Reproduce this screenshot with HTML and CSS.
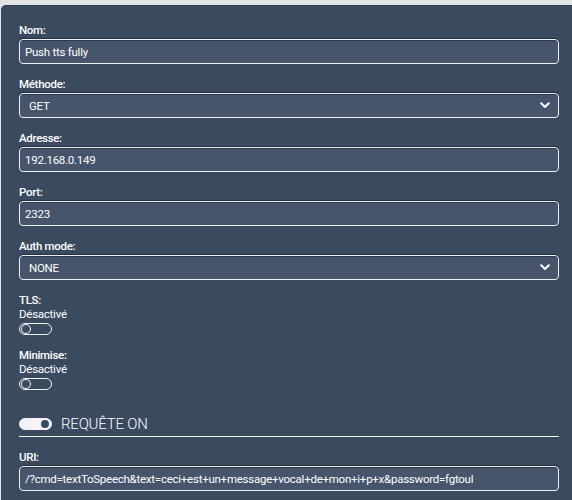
FILE: index.html
```html
<!DOCTYPE html>
<html lang="fr">

<head>
    <meta charset="UTF-8">
    <title>Requête HTTP</title>
    <link rel="stylesheet" href="styles.css">
</head>

<body>
    <!-- panel : le formulaire de la requête -->
    <div class="panel">
        <div class="field">
            <label class="fieldLabel">Nom:</label>
            <input class="fieldInput" type="text" value="Push tts fully">
        </div>
        <div class="field">
            <label class="fieldLabel">Méthode:</label>
            <div class="selectWrap">
                <select class="fieldInput fieldSelect">
                    <option>GET</option>
                    <option>POST</option>
                </select>
                <svg class="chevron" width="10" height="7" viewBox="0 0 10 7">
                    <path d="M1.2 1.3 L5 5 L8.8 1.3" fill="none" stroke="#fff" stroke-width="2" stroke-linecap="round" stroke-linejoin="round"/>
                </svg>
            </div>
        </div>
        <div class="field">
            <label class="fieldLabel">Adresse:</label>
            <input class="fieldInput" type="text" value="192.168.0.149">
        </div>
        <div class="field">
            <label class="fieldLabel">Port:</label>
            <input class="fieldInput" type="text" value="2323">
        </div>
        <div class="field">
            <label class="fieldLabel">Auth mode:</label>
            <div class="selectWrap">
                <select class="fieldInput fieldSelect">
                    <option>NONE</option>
                    <option>BASIC</option>
                </select>
                <svg class="chevron" width="10" height="7" viewBox="0 0 10 7">
                    <path d="M1.2 1.3 L5 5 L8.8 1.3" fill="none" stroke="#fff" stroke-width="2" stroke-linecap="round" stroke-linejoin="round"/>
                </svg>
            </div>
        </div>
        <!-- interrupteurs -->
        <div class="field">
            <label class="fieldLabel switchLabel">TLS:</label>
            <div class="switchState">Désactivé</div>
            <div class="switch"><span class="knob"></span></div>
        </div>
        <div class="field">
            <label class="fieldLabel switchLabel">Minimise:</label>
            <div class="switchState">Désactivé</div>
            <div class="switch"><span class="knob"></span></div>
        </div>
        <div class="requestRow">
            <div class="switch switchOn"><span class="knob"></span></div>
            <span class="requestText">REQUÊTE ON</span>
        </div>
        <div class="field">
            <label class="fieldLabel">URI:</label>
            <input class="fieldInput" type="text" value="/?cmd=textToSpeech&amp;text=ceci+est+un+message+vocal+de+mon+i+p+x&amp;password=fgtoul">
        </div>
    </div>
</body>

</html>
```

FILE: styles.css
```css
* {
    margin: 0;
    padding: 0;
    box-sizing: border-box;
}

body {
    background: #e2e3e5;
    font-family: Roboto, "Liberation Sans", sans-serif;
    color: #fff;
}

.panel {
    margin: 5px 0 0 1px;
    min-height: 495px;
    padding: 17px 13px 0 18px;
    background: #3a4a5f;
    border-radius: 5px 0 0 0;
    border-top: 1px solid #2c394a;
}

.field {
    margin-bottom: 13px;
}

.fieldLabel {
    display: block;
    height: 14px;
    font-size: 11.5px;
    line-height: 14px;
    font-weight: 500;
    letter-spacing: -0.3px;
    margin-bottom: 2px;
}

.fieldInput {
    display: block;
    width: 100%;
    height: 25px;
    padding: 0 5px;
    border: 1px solid #eef0f2;
    border-radius: 4px;
    background: #46556b;
    box-shadow: 0 -1px 0 #22303f, inset 0 1px 0 #2b394b;
    color: #fff;
    font-family: Roboto, "Liberation Sans", sans-serif;
    font-size: 11.5px;
    letter-spacing: -0.25px;
    outline: none;
}

.selectWrap {
    position: relative;
}

.fieldSelect {
    padding: 0 9px;
    appearance: none;
    -webkit-appearance: none;
}

.selectWrap .chevron {
    position: absolute;
    right: 9px;
    top: 9px;
    pointer-events: none;
}

.switchLabel {
    margin-bottom: 0;
}

.switchState {
    font-size: 11.5px;
    line-height: 14px;
    letter-spacing: -0.25px;
}

.switch {
    position: relative;
    width: 33px;
    height: 12px;
    margin-top: 2px;
    border: 1px solid #f2f2f2;
    border-radius: 6px;
}

.switch .knob {
    position: absolute;
    left: 1px;
    top: 0;
    width: 10px;
    height: 10px;
    border: 1px solid #f2f2f2;
    border-radius: 50%;
}

.switchOn {
    background: #f4f4f4;
}

.switchOn .knob {
    left: auto;
    right: 2px;
    top: 1px;
    width: 8px;
    height: 8px;
    border: none;
    background: #3a4a5f;
}

.requestRow {
    display: flex;
    align-items: center;
    gap: 9px;
    height: 16px;
    margin-top: 26px;
    box-sizing: content-box;
    padding-bottom: 4px;
    border-bottom: 1px solid #f2f2f2;
    margin-bottom: 13px;
}

.requestRow .switch {
    margin-top: 0;
}

.requestText {
    font-size: 15px;
    font-weight: 300;
    line-height: 16px;
    letter-spacing: -0.2px;
}
```
